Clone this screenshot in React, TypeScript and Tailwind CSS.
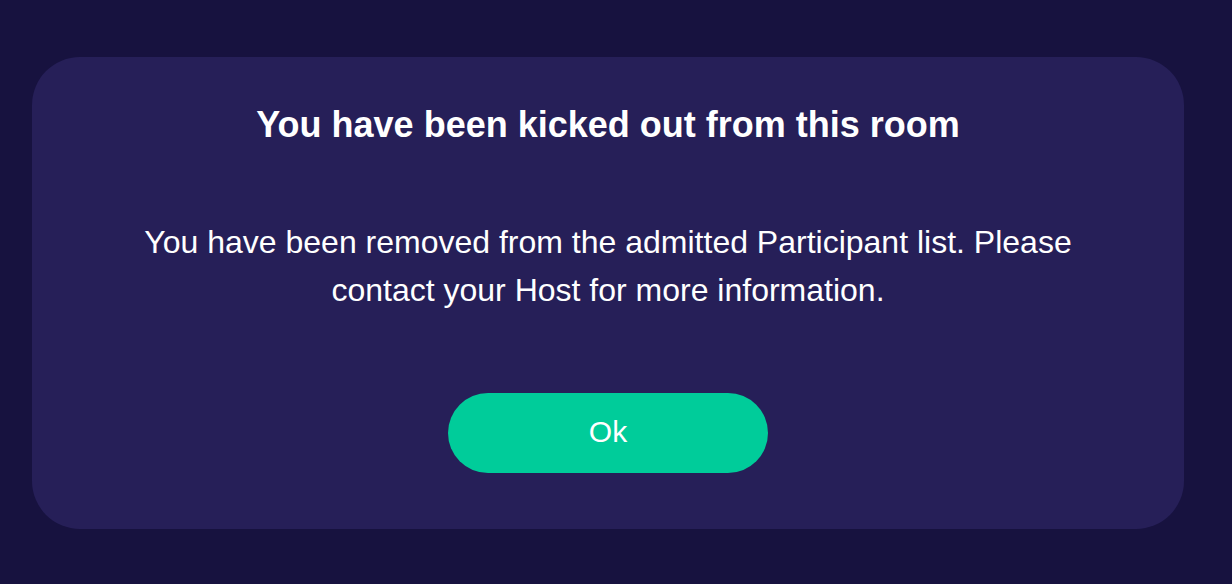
export default function App() {
  return (
    <div
      className="min-h-[584px] w-full bg-[#17123f] pl-8 pr-12 pt-[57px] pb-[55px]"
      style={{ fontFamily: '"Liberation Sans", Arial, sans-serif' }}
    >
      <div className="flex h-[472px] w-full flex-col items-center rounded-[48px] bg-[#261f58] px-8 pt-[48px] text-white">
        <h1 className="text-[36px] font-bold leading-[40px]">
          You have been kicked out from this room
        </h1>
        <p className="mt-[73px] max-w-[960px] text-center text-[32px] leading-[48px]">
          You have been removed from the admitted Participant list. Please contact your Host for more information.
        </p>
        <button className="mt-[79px] flex h-[80px] w-[320px] items-center justify-center rounded-full bg-[#00cc9a] pb-1 text-[30px] text-white">
          Ok
        </button>
      </div>
    </div>
  );
}
